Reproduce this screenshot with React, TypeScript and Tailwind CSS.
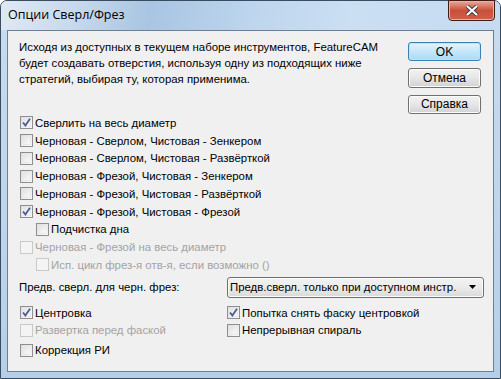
import React from 'react'

const FONT = { fontFamily: '"Liberation Sans", Arial, sans-serif' }

interface BoxProps {
  checked?: boolean
  disabled?: boolean
}

const Box = ({ checked, disabled }: BoxProps) => (
  <span
    className={
      'relative inline-block w-[13px] h-[13px] shrink-0 border ' +
      (disabled
        ? 'border-[#c9c9c9] bg-[#f4f4f4]'
        : 'border-[#8f8f8f] bg-gradient-to-br from-[#dcdcdc] to-[#fbfbfb]')
    }
  >
    {!disabled && (
      <span className="absolute inset-[1px] border border-[#e8e8e8] bg-gradient-to-br from-[#e3e3e3] to-[#fafafa]" />
    )}
    {checked && (
      <svg className="absolute left-0 top-0" width="11" height="11" viewBox="0 0 11 11">
        <path d="M2 5.5 L4.4 8.4 L9 1.8" fill="none" stroke="#4a5e96" strokeWidth="1.8" />
      </svg>
    )}
  </span>
)

interface RowProps extends BoxProps {
  label: string
  indent?: boolean
}

const Row = ({ label, checked, disabled, indent }: RowProps) => (
  <div className={'flex items-center h-[17.75px] ' + (indent ? 'pl-[16px]' : '')}>
    <Box checked={checked} disabled={disabled} />
    <span className={'ml-[2px] whitespace-nowrap ' + (disabled ? 'text-[#a3a3a3]' : 'text-black')}>
      {label}
    </span>
  </div>
)

const Btn = ({ label, primary }: { label: string; primary?: boolean }) => (
  <div
    className={
      'w-[73px] h-[20px] flex items-center justify-center rounded-[3px] border text-black text-[12px] ' +
      (primary
        ? 'border-[#3c7fb1] bg-gradient-to-b from-[#e6f4fc] via-[#c5e6f8] to-[#a9daf5] shadow-[inset_0_0_0_1px_#b9e6fb]'
        : 'border-[#707070] bg-gradient-to-b from-[#f3f3f3] via-[#e6e6e6] to-[#d2d2d2] shadow-[inset_0_0_0_1px_#fcfcfc]')
    }
  >
    {label}
  </div>
)

export default function App() {
  return (
    <div className="w-[501px] h-[379px] overflow-hidden bg-white">
      <div className="relative w-full h-full rounded-t-[7px] border border-[#3a4c60] bg-gradient-to-b from-[#c9dcf0] to-[#b6cfe9] flex flex-col">
        {/* title bar */}
        <div className="h-[29px] flex items-center pl-[7px] bg-[linear-gradient(100deg,#dfe9f5_0%,#c7d9ec_15%,#a9c5e2_30%,#bdd5ee_50%,#cbdff3_70%,#c5dbf1_100%)] rounded-t-[6px]">
          <span className="text-[12.5px] text-black" style={{ fontFamily: '"Open Sans", sans-serif' }}>
            Опции Сверл/Фрез
          </span>
        </div>
        <div className="absolute right-[5px] top-[-1px] w-[47px] h-[21px] rounded-b-[4px] border border-[#3e1b14] bg-gradient-to-b from-[#e8a899] via-[#c84f3c] to-[#d0604a] flex items-center justify-center shadow-[inset_0_0_0_1px_#eab1a4]">
          <svg width="14" height="11" viewBox="0 0 14 11">
            <path d="M2 1 L12 10 M12 1 L2 10" stroke="#3a3a3a" strokeWidth="4" />
            <path d="M2 1 L12 10 M12 1 L2 10" stroke="#ffffff" strokeWidth="2.2" />
          </svg>
        </div>

        {/* client area */}
        <div
          className="mx-[6px] h-[342px] border border-[#6f7f92] bg-[#f0f0f0] text-[11.4px] leading-[16px] flex flex-col"
          style={FONT}
        >
          <div className="flex h-[83px]">
            <div className="pl-[11px] pt-[8px] w-[400px] whitespace-nowrap">
              <p>Исходя из доступных в текущем наборе инструментов, FeatureCAM</p>
              <p>будет создавать отверстия, используя одну из подходящих ниже</p>
              <p>стратегий, выбирая ту, которая применима.</p>
            </div>
            <div className="pt-[11px] flex flex-col gap-[7px]">
              <Btn label="OK" primary />
              <Btn label="Отмена" />
              <Btn label="Справка" />
            </div>
          </div>

          <div className="pl-[12px] flex flex-col">
            <Row label="Сверлить на весь диаметр" checked />
            <Row label="Черновая - Сверлом, Чистовая - Зенкером" />
            <Row label="Черновая - Сверлом, Чистовая - Развёрткой" />
            <Row label="Черновая - Фрезой, Чистовая - Зенкером" />
            <Row label="Черновая - Фрезой, Чистовая - Развёрткой" />
            <Row label="Черновая - Фрезой, Чистовая - Фрезой" checked />
            <Row label="Подчистка дна" indent />
            <Row label="Черновая - Фрезой на весь диаметр" disabled />
            <Row label="Исп. цикл фрез-я отв-я, если возможно ()" disabled indent />
          </div>

          <div className="pl-[11px] mt-[3px] flex items-center h-[21px]">
            <span className="w-[208px] whitespace-nowrap">Предв. сверл. для черн. фрез:</span>
            <div className="w-[257px] h-[21px] rounded-[3px] border border-[#707070] bg-gradient-to-b from-[#f2f2f2] via-[#ebebeb] to-[#d9d9d9] shadow-[inset_0_0_0_1px_#fbfbfb] flex items-center pl-[2px] pr-[7px]">
              <span className="flex-1 whitespace-nowrap">Предв.сверл. только при доступном инстр.</span>
              <svg width="7" height="4" viewBox="0 0 7 4">
                <path d="M0 0 H7 L3.5 4 Z" fill="#000" />
              </svg>
            </div>
          </div>

          <div className="pl-[12px] mt-[6px] grid grid-cols-[207px_1fr]">
            <Row label="Центровка" checked />
            <Row label="Попытка снять фаску центровкой" checked />
            <Row label="Развертка перед фаской" disabled />
            <Row label="Непрерывная спираль" />
          </div>
          <div className="pl-[12px] mt-[2px]">
            <Row label="Коррекция РИ" />
          </div>
        </div>
      </div>
    </div>
  )
}
